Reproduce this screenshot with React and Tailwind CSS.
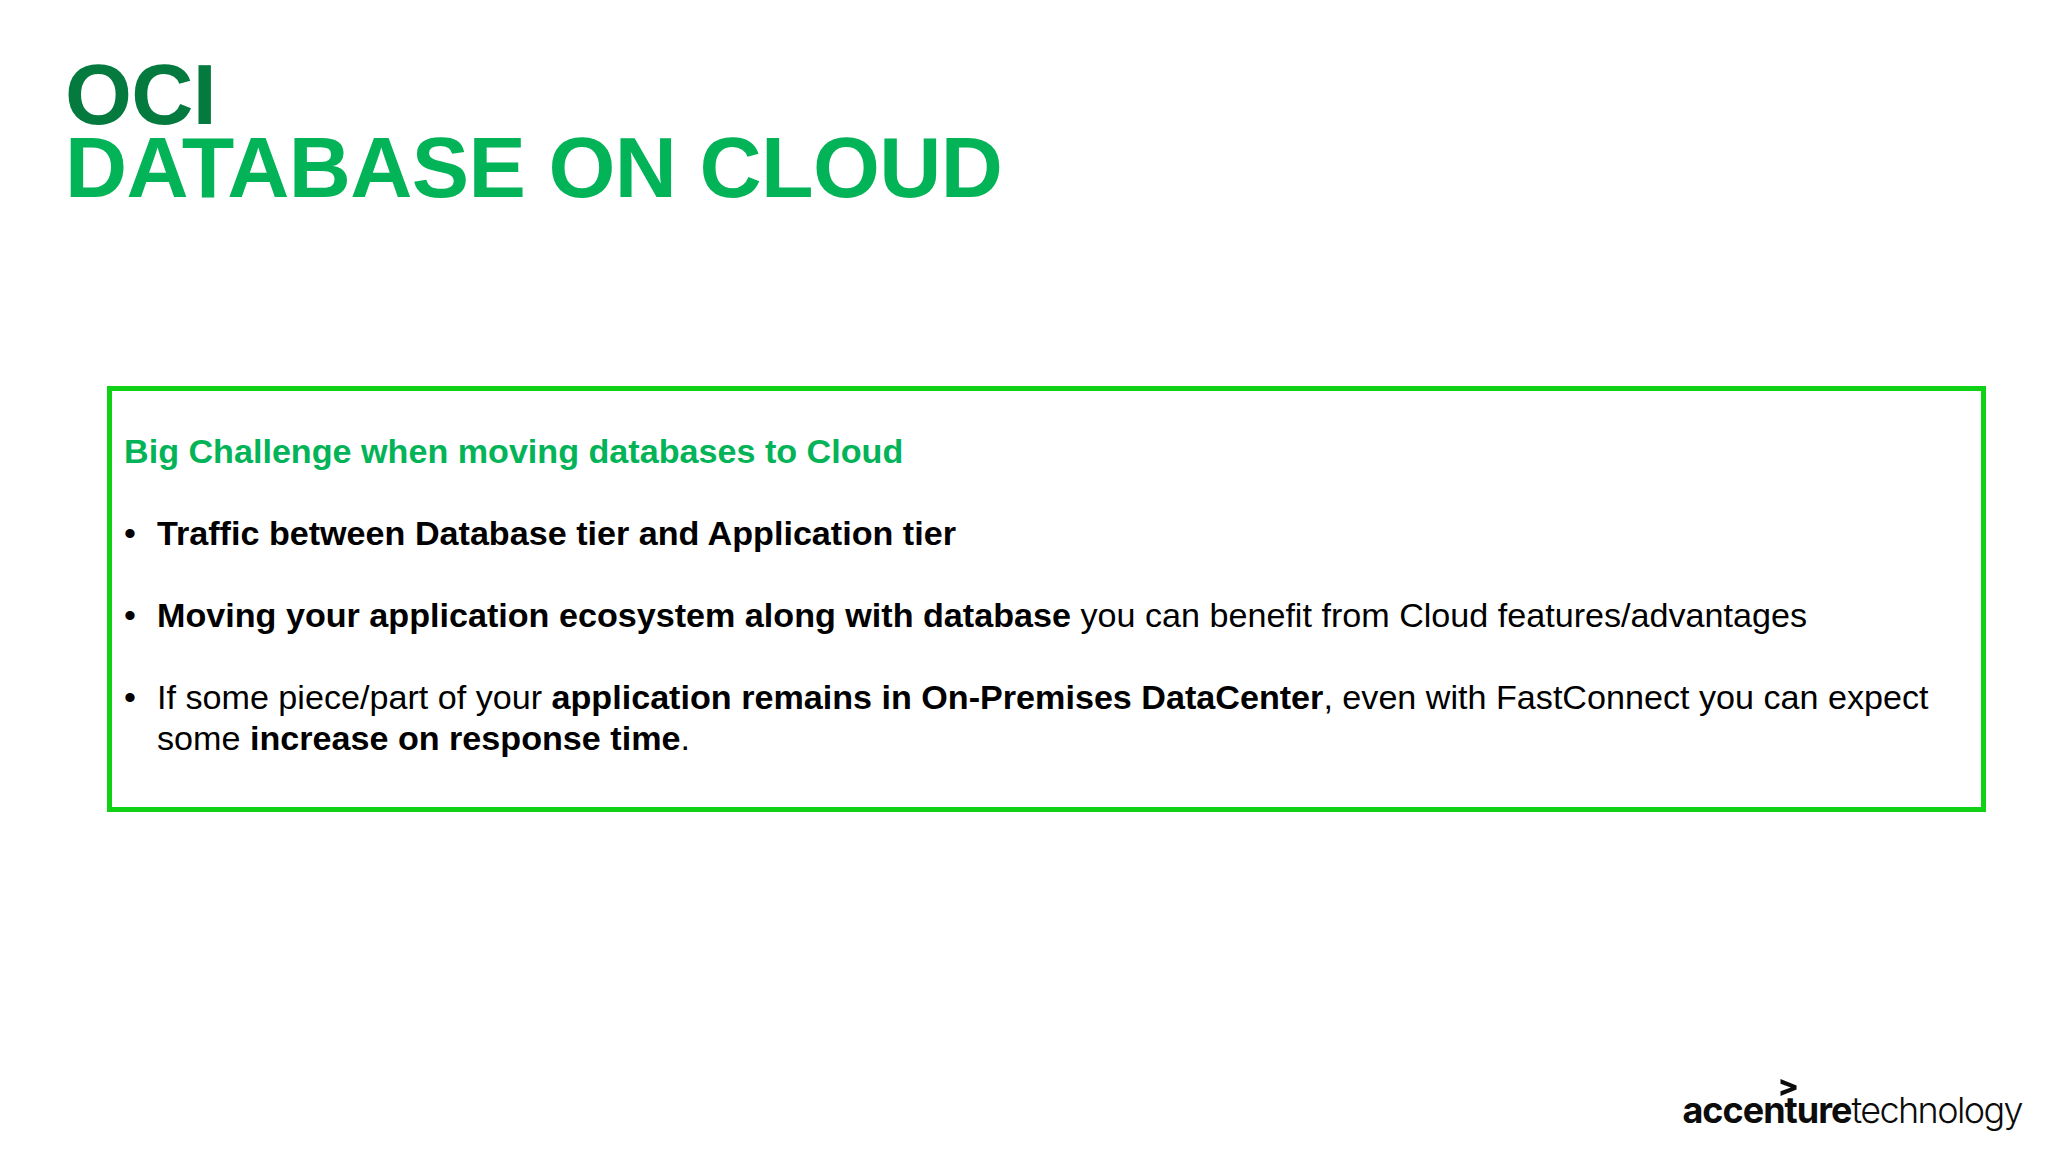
export default function App() {
  return (
    <div className="w-[2048px] h-[1152px] bg-white flex flex-col font-['Liberation_Sans',sans-serif] text-black overflow-hidden">
      {/* Title */}
      <div className="pl-[65px] pt-[58px] text-[86px] leading-[73px] font-bold tracking-[-0.6px]">
        <div className="text-[#047a3f]">OCI</div>
        <div className="text-[#03b358]">DATABASE ON CLOUD</div>
      </div>

      {/* Challenge box */}
      <div className="ml-[107px] mt-[182px] w-[1879px] h-[426px] border-[5px] border-[#10d116] pl-[12px] pt-[40px] text-[34.13px] leading-[41px]">
        <p className="font-bold text-[#03b358]">Big Challenge when moving databases to Cloud</p>
        <ul className="mt-[41px] flex flex-col gap-[41px]">
          <li className="flex">
            <span className="w-[33px] shrink-0">•</span>
            <span className="font-bold">Traffic between Database tier and Application tier</span>
          </li>
          <li className="flex">
            <span className="w-[33px] shrink-0">•</span>
            <span><b>Moving your application ecosystem along with database</b> you can benefit from Cloud features/advantages</span>
          </li>
          <li className="flex">
            <span className="w-[33px] shrink-0">•</span>
            <span>
              If some piece/part of your <b>application remains in On-Premises DataCenter</b>, even with FastConnect you can expect<br />
              some <b>increase on response time</b>.
            </span>
          </li>
        </ul>
      </div>

      {/* Logo */}
      <div className="mt-auto mb-[20px] mr-[26px] self-end relative flex items-baseline text-[36px] leading-[44px] font-['Inter',sans-serif] text-[#0c0c0c]">
        <span className="font-bold tracking-[-1px]">accenture</span>
        <span className="font-light tracking-[-1.6px]">technology</span>
        <svg className="absolute left-[98px] -top-[9px]" width="18" height="17" viewBox="0 0 18 18">
          <path d="M0 0 L17 7 V11 L0 18 V13 L11 9 L0 5 Z" fill="#0c0c0c" />
        </svg>
      </div>
    </div>
  );
}
